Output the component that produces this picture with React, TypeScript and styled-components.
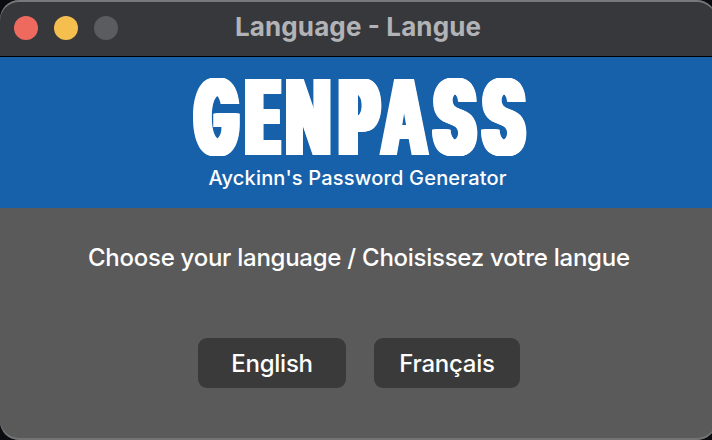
import React from "react";
import styled, { createGlobalStyle } from "styled-components";

const Global = createGlobalStyle`
  * { box-sizing: border-box; }
  html, body { margin: 0; background: #0b0b12; overflow: hidden; }
`;
const Window = styled.main`
  width: 716px;
  height: 440px;
  display: flex;
  flex-direction: column;
  overflow: hidden;
  border-radius: 19px;
  background: #5a5a5a;
  font-family: Inter, sans-serif;
  color: #fff;
  box-shadow: inset 0 -2px #737373;
`;
const TitleBar = styled.header`
  height: 57px;
  flex: none;
  display: grid;
  grid-template-columns: 118px 1fr 118px;
  align-items: center;
  background: #37383b;
  border-bottom: 1px solid #000;
  border-radius: 19px 19px 0 0;
  box-shadow: inset 0 2px #77787a;
`;
const Lights = styled.div`
  display: flex;
  gap: 16px;
  padding-left: 14px;
`;
const Light = styled.span<{ $color: string }>`
  width: 24px;
  height: 24px;
  border-radius: 50%;
  background: ${(p) => p.$color};
`;
const Title = styled.svg`
  width: 100%;
  height: 50px;
`;
const Banner = styled.section`
  height: 151px;
  flex: none;
  background: #1761aa;
`;
const Wordmark = styled.h1`
  display: flex;
  height: 104px;
  margin: 0;
  padding: 0 0 0 193px;
  font: 800 105px/119px Inter, sans-serif;
`;
const smear = (d: number) =>
  Array.from({ length: d * 2 + 1 }, (_, i) => `${i - d}px 0 #fff`).join(", ");
const Slot = styled.span<{ $width: number; $gap: number }>`
  display: flex;
  justify-content: center;
  flex: none;
  width: ${(p) => p.$width}px;
  margin-right: ${(p) => p.$gap}px;
`;
const Letter = styled.span<{ $scale: number; $spread: number }>`
  flex: none;
  transform: scaleX(${(p) => p.$scale});
  text-shadow: ${(p) => smear(p.$spread)};
`;
const Line = styled.svg`
  display: block;
  width: 100%;
`;
const Buttons = styled.div`
  display: flex;
  gap: 28px;
  padding-left: 198px;
`;
const Button = styled.button<{ $width: number }>`
  width: ${(p) => p.$width}px;
  height: 50px;
  padding: 0;
  border: 0;
  border-radius: 9px;
  background: #3a3a3a;
  color: #fff;
  font: 500 24px Inter, sans-serif;
  letter-spacing: -0.25px;
`;

const letters = [
  { char: "G", width: 46, gap: 7, scale: 0.54, spread: 8 },
  { char: "E", width: 35, gap: 5, scale: 0.51, spread: 9 },
  { char: "N", width: 45, gap: 7, scale: 0.55, spread: 6 },
  { char: "P", width: 43, gap: -1, scale: 0.57, spread: 8 },
  { char: "A", width: 49, gap: 3, scale: 0.58, spread: 5 },
  { char: "S", width: 45, gap: 4, scale: 0.6, spread: 7 },
  { char: "S", width: 45, gap: 0, scale: 0.6, spread: 7 },
];

export default function App() {
  return (
    <Window>
      <Global />
      <TitleBar>
        <Lights>
          <Light $color="#ee6a5f" />
          <Light $color="#f5bf4f" />
          <Light $color="#5b5c60" />
        </Lights>
        <Title><text x="117" y="33" fontSize="26" fontWeight="700" fill="#b2b3b7" textLength="246">Language - Langue</text></Title>
      </TitleBar>
      <Banner>
        <Wordmark aria-label="GENPASS">
          {letters.map((l, i) => (
            <Slot key={i} $width={l.width} $gap={l.gap}>
              <Letter $scale={l.scale} $spread={l.spread}>{l.char}</Letter>
            </Slot>
          ))}
        </Wordmark>
        <Line height="47">
          <text x="208.5" y="24" fontSize="20" fontWeight="500" fill="#fff" textLength="298">Ayckinn's Password Generator</text>
        </Line>
      </Banner>
      <Line height="130"><text x="88" y="58" fontSize="24" fontWeight="450" fill="#fff" textLength="542">Choose your language / Choisissez votre langue</text></Line>
      <Buttons>
        <Button $width={148}>English</Button>
        <Button $width={146}>Français</Button>
      </Buttons>
    </Window>
  );
}
